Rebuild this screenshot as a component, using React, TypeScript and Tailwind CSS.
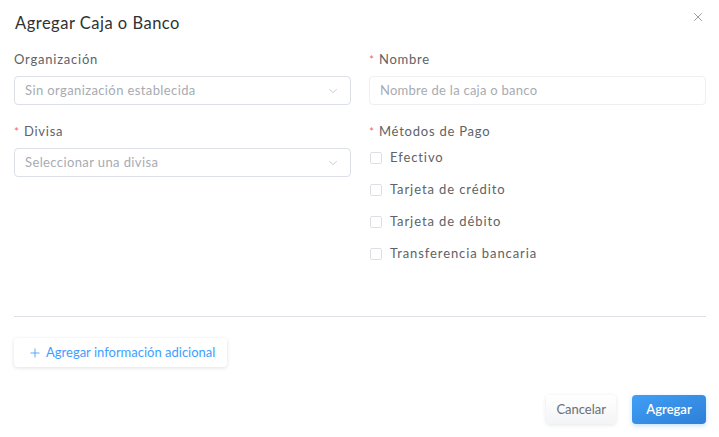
import { ChevronDown, Plus, X } from 'lucide-react'

const methods = ['Efectivo', 'Tarjeta de crédito', 'Tarjeta de débito', 'Transferencia bancaria']

function Label({ text, required }: { text: string; required?: boolean }) {
  return (
    <div className="flex items-center h-[18px] text-[13px] tracking-[0.06em] text-[#606266]">
      {required && <span className="mr-1 text-[#f56c6c] text-[12px]">*</span>}
      {text}
    </div>
  )
}

function Select({ placeholder }: { placeholder: string }) {
  return (
    <div className="mt-[7px] flex h-[29px] items-center justify-between rounded-[4px] border border-[#dcdfe6] px-[10px] text-[13px] tracking-[0.03em] text-[#a8abb2]">
      <span>{placeholder}</span>
      <ChevronDown className="h-[14px] w-[14px] text-[#c0c4cc]" strokeWidth={1.5} />
    </div>
  )
}

export default function App() {
  return (
    <div
      className="relative h-[437px] w-[719px] bg-white"
      style={{ fontFamily: 'Lato, "Noto Sans", sans-serif' }}
    >
      <button className="absolute right-[14px] top-[10px] text-[#8d8f94]">
        <X className="h-[14px] w-[14px]" strokeWidth={1.5} />
      </button>

      <div className="pl-[14px] pr-[13px] pt-[12px]">
        <h2 className="pl-px text-[16.5px] leading-[22px] tracking-[0.03em] text-[#303133]">Agregar Caja o Banco</h2>

        <div className="mt-[17px] grid grid-cols-[337px_1fr] gap-x-[18px]">
          <div>
            <Label text="Organización" />
            <Select placeholder="Sin organización establecida" />
          </div>
          <div>
            <Label text="Nombre" required />
            <div className="mt-[7px] flex h-[29px] items-center rounded-[4px] border border-[#eeeff2] px-[10px] text-[13px] tracking-[0.02em] text-[#a8abb2]">
              Nombre de la caja o banco
            </div>
          </div>

          <div className="mt-[18px]">
            <Label text="Divisa" required />
            <Select placeholder="Seleccionar una divisa" />
          </div>
          <div className="mt-[18px]">
            <Label text="Métodos de Pago" required />
            <div className="mt-[1px] flex flex-col">
              {methods.map((m) => (
                <label key={m} className="flex h-[32px] items-center gap-[8px] text-[13px] tracking-[0.07em] text-[#606266]">
                  <span className="ml-px h-[12px] w-[12px] rounded-[2px] border border-[#dcdfe6] bg-white" />
                  {m}
                </label>
              ))}
            </div>
          </div>
        </div>

        <div className="mt-[46px] h-px w-full bg-[#dcdfe6]" />

        <button className="mt-[21px] flex h-[29px] items-center gap-[4px] rounded-[4px] bg-white pl-[14px] pr-[12px] text-[13px] text-[#409eff] shadow-[0_1px_4px_rgba(0,0,0,0.12)]">
          <Plus className="h-[14px] w-[14px]" strokeWidth={1.5} />
          Agregar información adicional
        </button>

        <div className="mt-[28px] flex justify-end gap-[16px]">
          <button className="h-[29px] rounded-[4px] bg-gradient-to-b from-white to-[#f3f4f6] px-[10px] text-[13px] text-[#6b6e76] shadow-[0_1px_4px_rgba(0,0,0,0.1)]">
            Cancelar
          </button>
          <button className="h-[29px] w-[74px] rounded-[4px] bg-gradient-to-br from-[#3f9ff7] to-[#2f7fd6] text-[13px] font-semibold text-white shadow-[0_2px_5px_rgba(64,158,255,0.3)]">
            Agregar
          </button>
        </div>
      </div>
    </div>
  )
}
